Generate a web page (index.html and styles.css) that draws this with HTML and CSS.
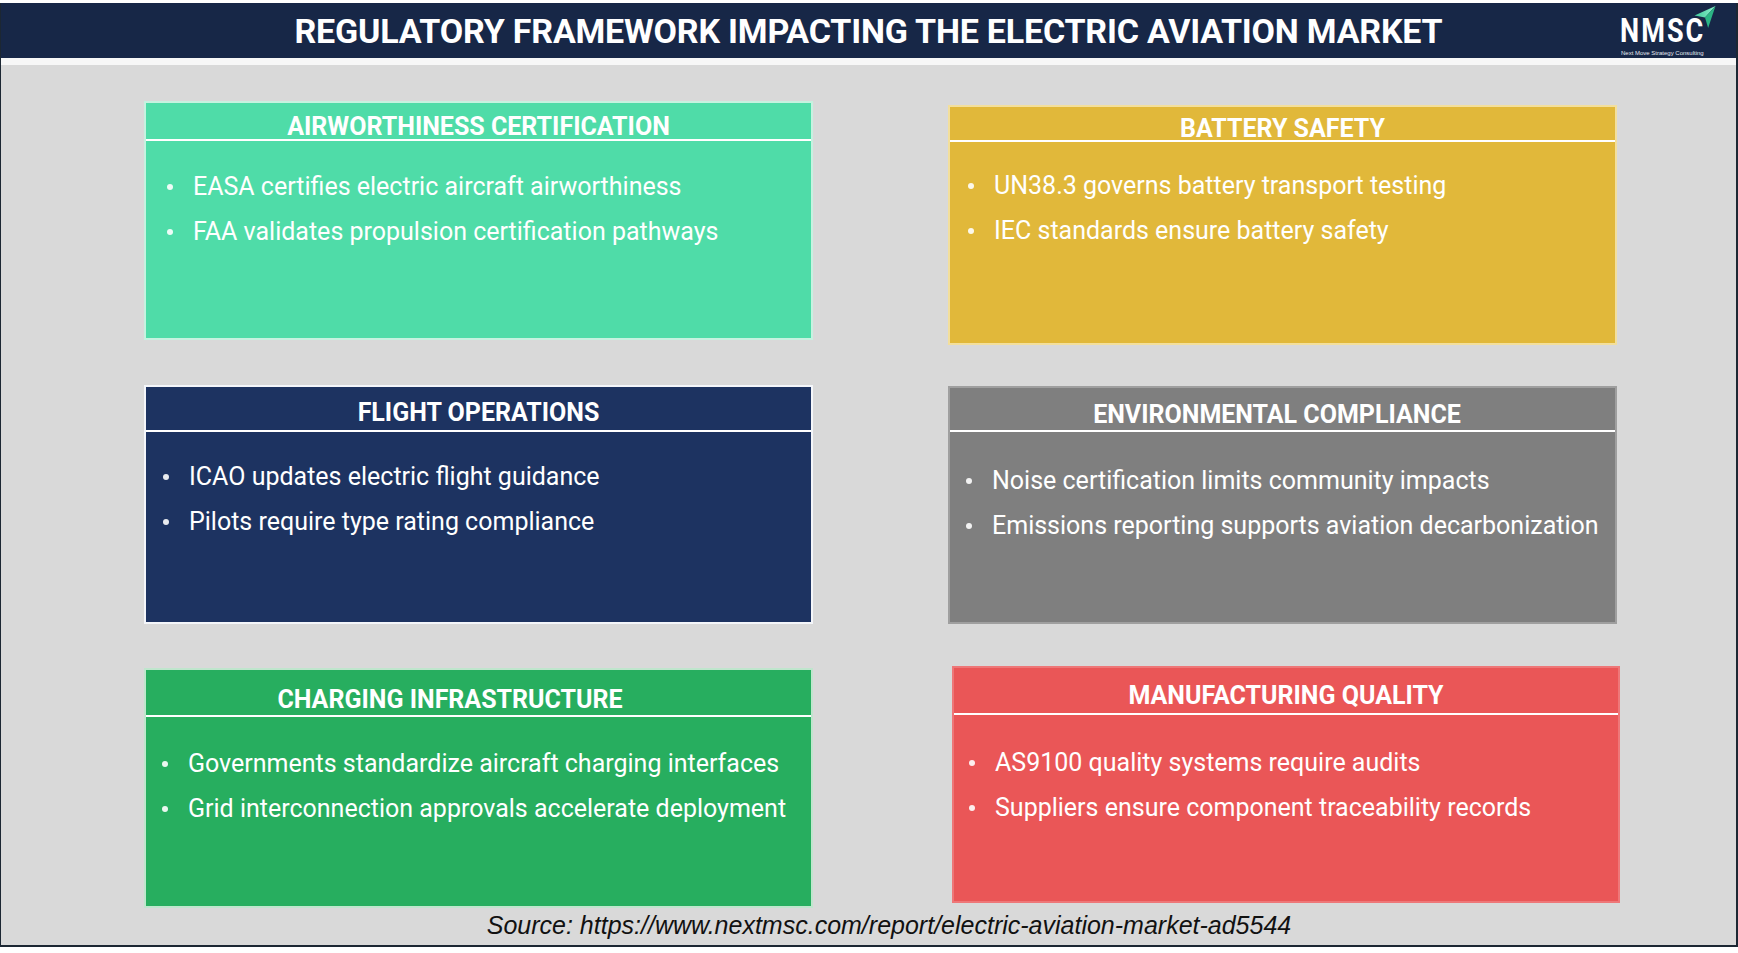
FILE: index.html
```html
<!DOCTYPE html>
<html lang="en">
<head>
<meta charset="utf-8">
<title>Regulatory Framework Impacting the Electric Aviation Market</title>
<link rel="stylesheet" href="styles.css">
</head>
<body>
<div class="frame">
  <header class="header">
    <h1 class="title">REGULATORY FRAMEWORK IMPACTING THE ELECTRIC AVIATION MARKET</h1>
    <div class="logo">
      <div class="logo-mark">NMSC</div>
      <div class="logo-sub">Next Move Strategy Consulting</div>
      <svg class="logo-arrow" width="24" height="22" viewBox="0 0 20 21" aria-hidden="true">
        <defs>
          <linearGradient id="ga" x1="0" y1="0" x2="1" y2="0">
            <stop offset="0" stop-color="#3fc99a"/>
            <stop offset="1" stop-color="#8ff0cc"/>
          </linearGradient>
        </defs>
        <polygon points="20,0 0,9 10,11" fill="url(#ga)"/>
        <polygon points="20,0 10,11 13,21" fill="#2bb585"/>
      </svg>
    </div>
  </header>
  <div class="strip"></div>
  <main class="main">
    <div class="grid">
      <section class="card card--air">
        <div class="card-title">AIRWORTHINESS CERTIFICATION</div>
        <ul class="card-list">
          <li><span class="dot"></span>EASA certifies electric aircraft airworthiness</li>
          <li><span class="dot"></span>FAA validates propulsion certification pathways</li>
        </ul>
      </section>
      <section class="card card--battery">
        <div class="card-title">BATTERY SAFETY</div>
        <ul class="card-list">
          <li><span class="dot"></span>UN38.3 governs battery transport testing</li>
          <li><span class="dot"></span>IEC standards ensure battery safety</li>
        </ul>
      </section>
      <section class="card card--flight">
        <div class="card-title">FLIGHT OPERATIONS</div>
        <ul class="card-list">
          <li><span class="dot"></span>ICAO updates electric flight guidance</li>
          <li><span class="dot"></span>Pilots require type rating compliance</li>
        </ul>
      </section>
      <section class="card card--env">
        <div class="card-title">ENVIRONMENTAL COMPLIANCE</div>
        <ul class="card-list">
          <li><span class="dot"></span>Noise certification limits community impacts</li>
          <li><span class="dot"></span>Emissions reporting supports aviation decarbonization</li>
        </ul>
      </section>
      <section class="card card--charge">
        <div class="card-title">CHARGING INFRASTRUCTURE</div>
        <ul class="card-list">
          <li><span class="dot"></span>Governments standardize aircraft charging interfaces</li>
          <li><span class="dot"></span>Grid interconnection approvals accelerate deployment</li>
        </ul>
      </section>
      <section class="card card--mfg">
        <div class="card-title">MANUFACTURING QUALITY</div>
        <ul class="card-list">
          <li><span class="dot"></span>AS9100 quality systems require audits</li>
          <li><span class="dot"></span>Suppliers ensure component traceability records</li>
        </ul>
      </section>
    </div>
    <p class="source">Source: https://www.nextmsc.com/report/electric-aviation-market-ad5544</p>
  </main>
</div>
</body>
</html>
```
FILE: styles.css
```css
* { box-sizing: border-box; }
html, body { margin: 0; padding: 0; }
body {
  background: #ffffff;
  padding-top: 3px;
  font-family: Roboto, "Liberation Sans", Arial, sans-serif;
  width: 1738px;
  height: 953px;
  overflow: hidden;
}
.frame {
  width: 1738px;
  border-left: 1px solid #1c2733;
  border-right: 2px solid #1c2733;
  border-bottom: 2px solid #1c2733;
}
.header {
  height: 55px;
  background: #172747;
  display: grid;
  grid-template-columns: 1fr auto 1fr;
  align-items: center;
}
.title {
  grid-column: 2;
  margin: 0;
  color: #ffffff;
  font-family: Roboto, "Liberation Sans", sans-serif;
  font-weight: 700;
  font-size: 34px;
  line-height: 38px;
  white-space: nowrap;
  letter-spacing: -0.2px;
}
.logo {
  grid-column: 3;
  justify-self: end;
  align-self: start;
  margin-top: 12px;
  margin-right: 20px;
  width: 96px;
  position: relative;
  display: flex;
  flex-direction: column;
  align-items: flex-start;
}
.logo-mark {
  color: #ffffff;
  font-weight: 700;
  font-size: 33px;
  line-height: 32px;
  letter-spacing: 2.5px;
  transform: scaleX(0.82);
  transform-origin: left center;
  white-space: nowrap;
}
.logo-sub {
  color: #e6e9ef;
  font-family: "Liberation Sans", Arial, sans-serif;
  font-size: 6px;
  line-height: 8px;
  margin-top: 2px;
  margin-left: 1px;
  white-space: nowrap;
}
.logo-arrow {
  position: absolute;
  left: 73px;
  top: -9px;
}
.strip {
  height: 7px;
  background: #f7f7f7;
}
.main {
  height: 880px;
  background: #d9d9d9;
  padding-top: 36px;
}
.grid {
  margin-left: 143px;
  width: 1473px;
  display: grid;
  grid-template-columns: 669px 669px;
  grid-template-rows: 239px 239px 239px;
  column-gap: 135px;
  row-gap: 45px;
}
.card {
  border: 2px solid rgba(255, 255, 255, 0.6);
  color: #ffffff;
  display: flex;
  flex-direction: column;
}
.card-title {
  text-align: center;
  font-weight: 700;
  font-size: 25px;
  line-height: 22px;
  border-bottom: 2px solid #ffffff;
  white-space: nowrap;
}
.card-list {
  list-style: none;
  margin: 0;
  padding: 23px 0 0 17px;
}
.card-list li {
  display: flex;
  align-items: center;
  font-size: 25px;
  line-height: 45px;
  white-space: nowrap;
}
.dot {
  flex: none;
  width: 6px;
  height: 6px;
  border-radius: 50%;
  background: rgba(255, 255, 255, 0.9);
  margin-right: 20px;
}

.card--air { background: #4fdca8; border-color: #c6f2e0; }
.card--air .card-title { padding: 13px 0 1px; }
.card--air .card-list { padding-left: 21px; }

.card--battery { background: #e1b83a; border-color: #f3df9c; margin: 4px 0 -5px; }
.card--battery .card-title { padding: 11px 0 0; }
.card--battery .card-list { padding-top: 21px; padding-left: 18px; }

.card--flight { background: #1d3361; border-color: #f4f6fa; }
.card--flight .card-title { padding: 15px 0 6px; }
.card--flight .card-list { padding-top: 22px; }

.card--env { background: #7f7f7f; border-color: rgba(255, 255, 255, 0.25); margin-top: 1px; }
.card--env .card-title { padding: 16px 11px 4px 0; }
.card--env .card-list { padding-top: 26px; padding-left: 16px; }

.card--charge { background: #27ae5f; border-color: #bfe6cd; margin-top: -1px; }
.card--charge .card-title { padding: 19px 57px 4px 0; }
.card--charge .card-list { padding-top: 24px; padding-left: 16px; }

.card--mfg { background: #ea5657; border-color: rgba(255, 255, 255, 0.2); margin: -3px -3px 5px 4px; }
.card--mfg .card-title { padding: 17px 0 6px; }
.card--mfg .card-list { padding-top: 25px; padding-left: 15px; }

.source {
  margin: 3px 0 0;
  padding-left: 41px;
  text-align: center;
  font-family: "Liberation Sans", Arial, sans-serif;
  font-style: italic;
  font-size: 25px;
  line-height: 28px;
  color: #111111;
  white-space: nowrap;
}
```
